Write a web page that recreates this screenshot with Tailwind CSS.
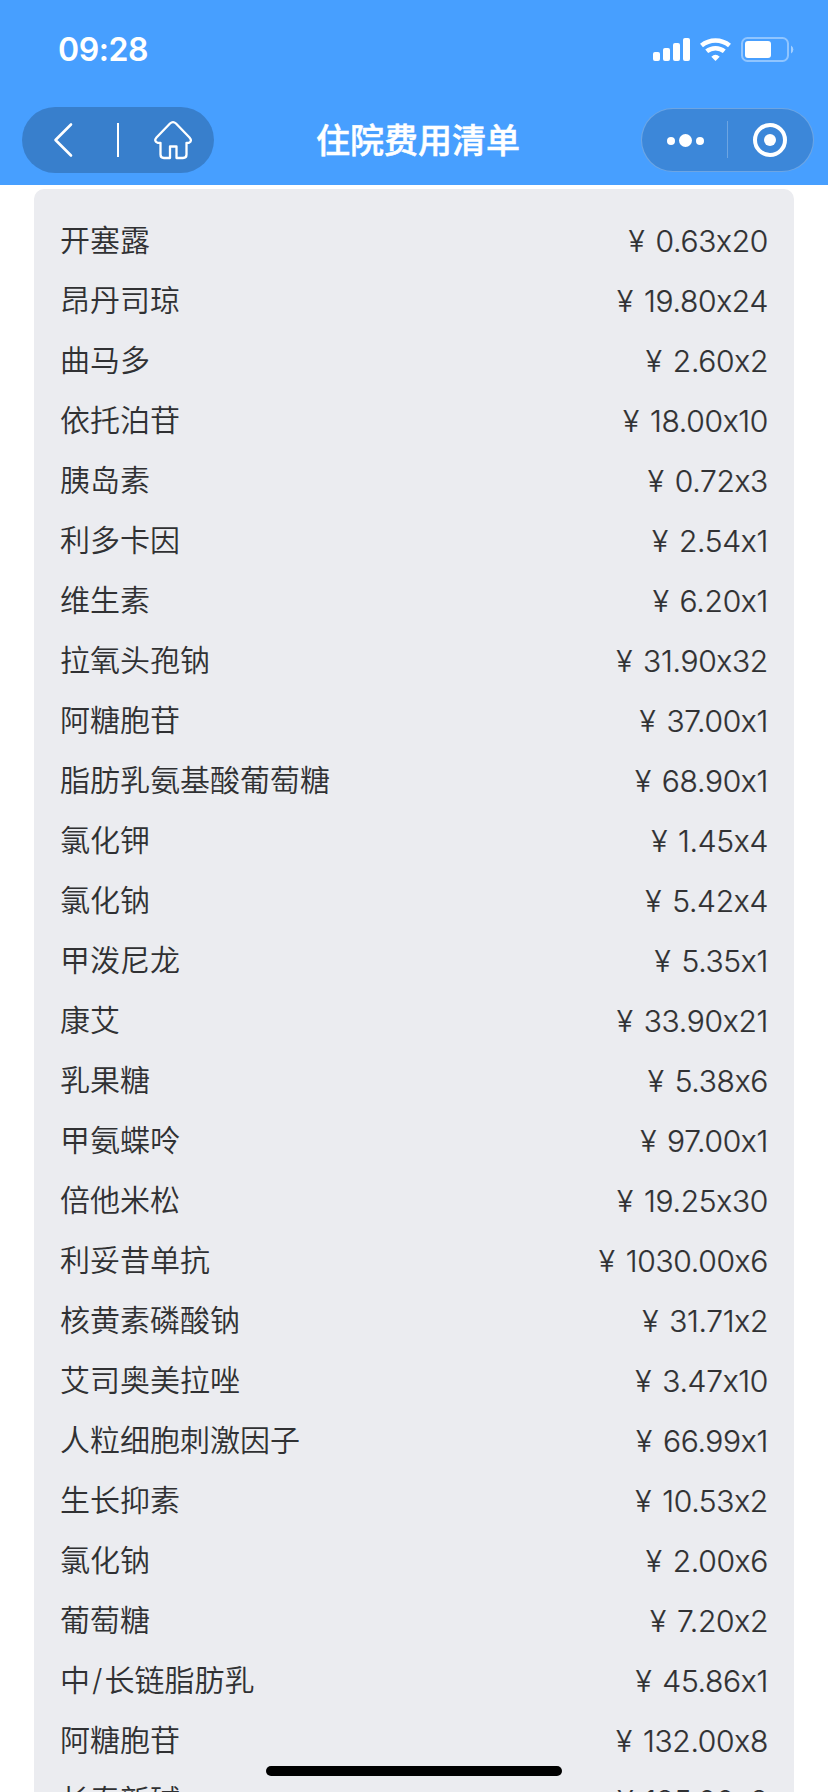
<!DOCTYPE html>
<html lang="zh-CN">
<head>
    <meta charset="UTF-8" />
    <meta name="viewport" content="width=device-width, initial-scale=1.0" />
    <title>住院费用清单</title>
    <script src="https://cdn.jsdelivr.net/npm/@tailwindcss/browser@4"></script>
</head>
<body class="bg-white h-[1792px] overflow-hidden font-['Inter','Noto_Sans_CJK_SC',sans-serif]">

    <div class="relative flex flex-col h-[1792px] overflow-hidden">

        <header class="shrink-0 h-[185px] bg-[#479fff] text-white">
            <!-- Status bar -->
            <div class="flex items-center justify-between h-[99px] pl-[58px] pr-[34px]">
                <span class="text-[32px] leading-none font-semibold tracking-[-0.4px]">09:28</span>
                <svg class="w-[142px] h-[26px]" viewBox="0 0 142 26" fill="none">
                    <rect x="1" y="15" width="7" height="9" rx="2" fill="#fff" />
                    <rect x="11" y="11" width="7" height="13" rx="2" fill="#fff" />
                    <rect x="21" y="6" width="7" height="18" rx="2" fill="#fff" />
                    <rect x="31" y="1" width="7" height="23" rx="2" fill="#fff" />
                    <path d="M49.5 8.6A22 22 0 0 1 77.5 8.6" stroke="#fff" stroke-width="4.6" />
                    <path d="M54.7 14.3A14 14 0 0 1 72.3 14.3" stroke="#fff" stroke-width="4.6" />
                    <path d="M59.3 19.7Q63.5 16 67.7 19.7L63.5 24Z" fill="#fff" />
                    <rect x="90" y="1" width="46" height="23" rx="5.5" stroke="#fff" stroke-opacity=".4" stroke-width="2" />
                    <rect x="93" y="4" width="26" height="17" rx="3" fill="#fff" />
                    <path d="M139 8.5a4.6 4.6 0 0 1 0 8z" fill="#fff" fill-opacity=".5" />
                </svg>
            </div>

            <!-- Nav bar -->
            <div class="flex items-center h-[82px] pl-[22px] pr-[14px]">
                <div class="w-48 h-[66px] rounded-full bg-black/20">
                    <svg class="w-48 h-[66px]" viewBox="0 0 192 66" fill="none" stroke="#fff" stroke-width="2.6" stroke-linecap="round" stroke-linejoin="round">
                        <path d="M49 17.5L33.5 33L49 48.5" />
                        <path d="M96 16V50" stroke-width="2" stroke-linecap="butt" />
                        <path d="M148 16.500Q151 13.800 154 16.500L167.500 30.500Q170.500 34 167 35.800H164.500V47.500Q164.500 51 161 51H154.500V39.500H148V51H142Q138.500 51 138.500 47.500V35.800H135.500Q131.500 34 134.500 30.500Z" stroke-width="2.3" />
                    </svg>
                </div>
                <h1 class="ml-[102px] pt-0.5 text-[34px] leading-none font-medium [-webkit-text-stroke:0.5px_white] whitespace-nowrap">住院费用清单</h1>
                <div class="ml-auto w-[173px] h-16 rounded-full bg-black/15 border border-white/25">
                    <svg class="w-[171px] h-[62px]" viewBox="0 0 171 62" fill="#fff">
                        <circle cx="29" cy="32" r="4" />
                        <circle cx="43.500" cy="31.500" r="6.500" />
                        <circle cx="58" cy="32" r="4" />
                        <rect x="85" y="12" width="1" height="37" fill-opacity=".25" />
                        <circle cx="128" cy="31" r="15" fill="none" stroke="#fff" stroke-width="4" />
                        <circle cx="128" cy="31" r="6" />
                    </svg>
                </div>
            </div>
        </header>

        <!-- Fee list -->
        <main class="grow mt-1 mx-[34px] pt-[21px] px-[26px] rounded-t-[10px] bg-[#ebecf0] text-[#303133]">
            <ul id="feeList"></ul>
        </main>

        <!-- Home indicator -->
        <div class="absolute bottom-4 left-[266px] w-[296px] h-[10px] rounded-full bg-black"></div>
    </div>

    <script>
        const fees = [
            ["开塞露", "0.63x20"],
            ["昂丹司琼", "19.80x24"],
            ["曲马多", "2.60x2"],
            ["依托泊苷", "18.00x10"],
            ["胰岛素", "0.72x3"],
            ["利多卡因", "2.54x1"],
            ["维生素", "6.20x1"],
            ["拉氧头孢钠", "31.90x32"],
            ["阿糖胞苷", "37.00x1"],
            ["脂肪乳氨基酸葡萄糖", "68.90x1"],
            ["氯化钾", "1.45x4"],
            ["氯化钠", "5.42x4"],
            ["甲泼尼龙", "5.35x1"],
            ["康艾", "33.90x21"],
            ["乳果糖", "5.38x6"],
            ["甲氨蝶呤", "97.00x1"],
            ["倍他米松", "19.25x30"],
            ["利妥昔单抗", "1030.00x6"],
            ["核黄素磷酸钠", "31.71x2"],
            ["艾司奥美拉唑", "3.47x10"],
            ["人粒细胞刺激因子", "66.99x1"],
            ["生长抑素", "10.53x2"],
            ["氯化钠", "2.00x6"],
            ["葡萄糖", "7.20x2"],
            ["中<span class='mx-[2px]'>/</span>长链脂肪乳", "45.86x1"],
            ["阿糖胞苷", "132.00x8"],
            ["长春新碱", "185.00x2"]
        ];

        document.getElementById("feeList").innerHTML = fees.map(([name, price]) => `
            <li class="flex items-center justify-between h-[60px] text-[30px] leading-[60px] whitespace-nowrap">
                <span class="font-[350]">${name}</span>
                <span class="pt-px font-light tracking-[-0.3px] [-webkit-text-stroke:0.2px_#303133]"><span class="mr-[11px]">¥</span>${price}</span>
            </li>`).join("");
    </script>

</body>
</html>
